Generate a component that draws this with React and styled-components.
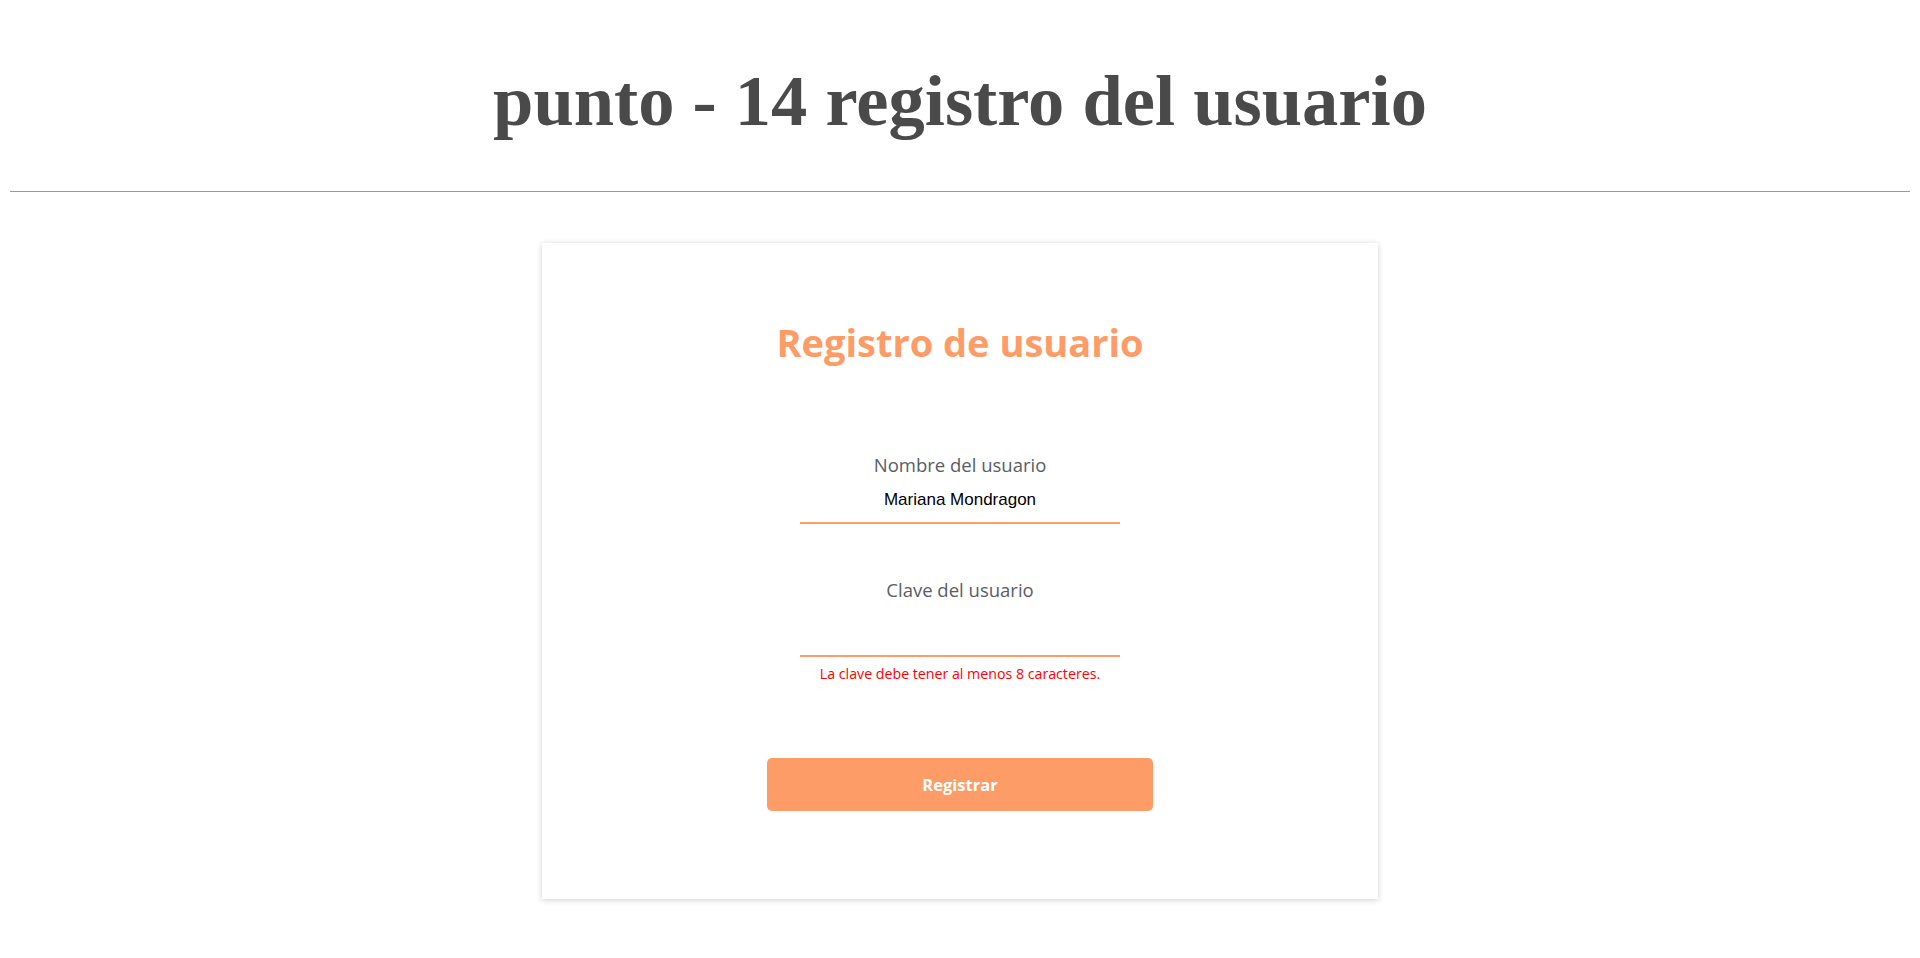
import styled, { createGlobalStyle } from "styled-components";

const orange = "#fd9c67";

const GlobalStyle = createGlobalStyle`
  body {
    margin: 0;
    background: #fff;
    font-family: "Open Sans", "Noto Sans", sans-serif;
  }
`;

const Page = styled.main`
  min-height: 100vh;
  padding-bottom: 40px;
  box-sizing: border-box;
`;

const Header = styled.header`
  padding-top: 60px;
  text-align: center;
`;

const Title = styled.h1`
  margin: 0;
  font-family: "Liberation Serif", "Times New Roman", serif;
  font-size: 72.5px;
  line-height: 82px;
  font-weight: 700;
  color: #4a4a4a;
`;

const Divider = styled.hr`
  margin: 49px 10px 0;
  border: 0;
  border-top: 1px solid #9a9a9a;
  height: 0;
`;

const Card = styled.section`
  width: 836px;
  box-sizing: border-box;
  margin: 51px auto 0;
  padding: 75px 0 88px;
  background: #fff;
  box-shadow: 0 1px 6px rgba(0, 0, 0, 0.2);
`;

const Form = styled.form`
  display: flex;
  flex-direction: column;
  align-items: center;
`;

const Heading = styled.h2`
  margin: 0;
  font-size: 38px;
  line-height: 48px;
  font-weight: 700;
  color: ${orange};
`;

const Field = styled.div`
  display: flex;
  flex-direction: column;
  align-items: center;
  margin-top: ${({ $top }) => $top}px;
`;

const Label = styled.label`
  font-size: 18.5px;
  line-height: 26px;
  color: #5a5d66;
`;

const Input = styled.input`
  box-sizing: border-box;
  width: 320px;
  height: 46px;
  margin-top: ${({ $offset }) => $offset || 0}px;
  padding: 0;
  border: 0;
  border-bottom: 2px solid ${orange};
  outline: none;
  background: transparent;
  text-align: center;
  font-family: "Liberation Sans", Arial, sans-serif;
  font-size: 17px;
  color: #000;
`;

const ErrorText = styled.p`
  margin: 7px 0 0;
  font-size: 14.2px;
  line-height: 20px;
  color: #ff0000;
`;

const SubmitButton = styled.button`
  width: 386px;
  height: 53px;
  margin-top: 74px;
  border: 0;
  border-radius: 5px;
  background: ${orange};
  color: #fff;
  font-family: "Open Sans", "Noto Sans", sans-serif;
  font-size: 16.5px;
  font-weight: 700;
  cursor: pointer;
`;

export default function App() {
  return (
    <Page>
      <GlobalStyle />
      <Header>
        <Title>punto - 14 registro del usuario</Title>
      </Header>
      <Divider />
      <Card>
        <Form onSubmit={e => e.preventDefault()}>
          <Heading>Registro de usuario</Heading>
          <Field $top={86}>
            <Label htmlFor="nombre">Nombre del usuario</Label>
            <Input id="nombre" type="text" defaultValue="Mariana Mondragon" />
          </Field>
          <Field $top={53}>
            <Label htmlFor="clave">Clave del usuario</Label>
            <Input id="clave" type="password" $offset={8} />
          </Field>
          <ErrorText>La clave debe tener al menos 8 caracteres.</ErrorText>
          <SubmitButton type="submit">Registrar</SubmitButton>
        </Form>
      </Card>
    </Page>
  );
}
